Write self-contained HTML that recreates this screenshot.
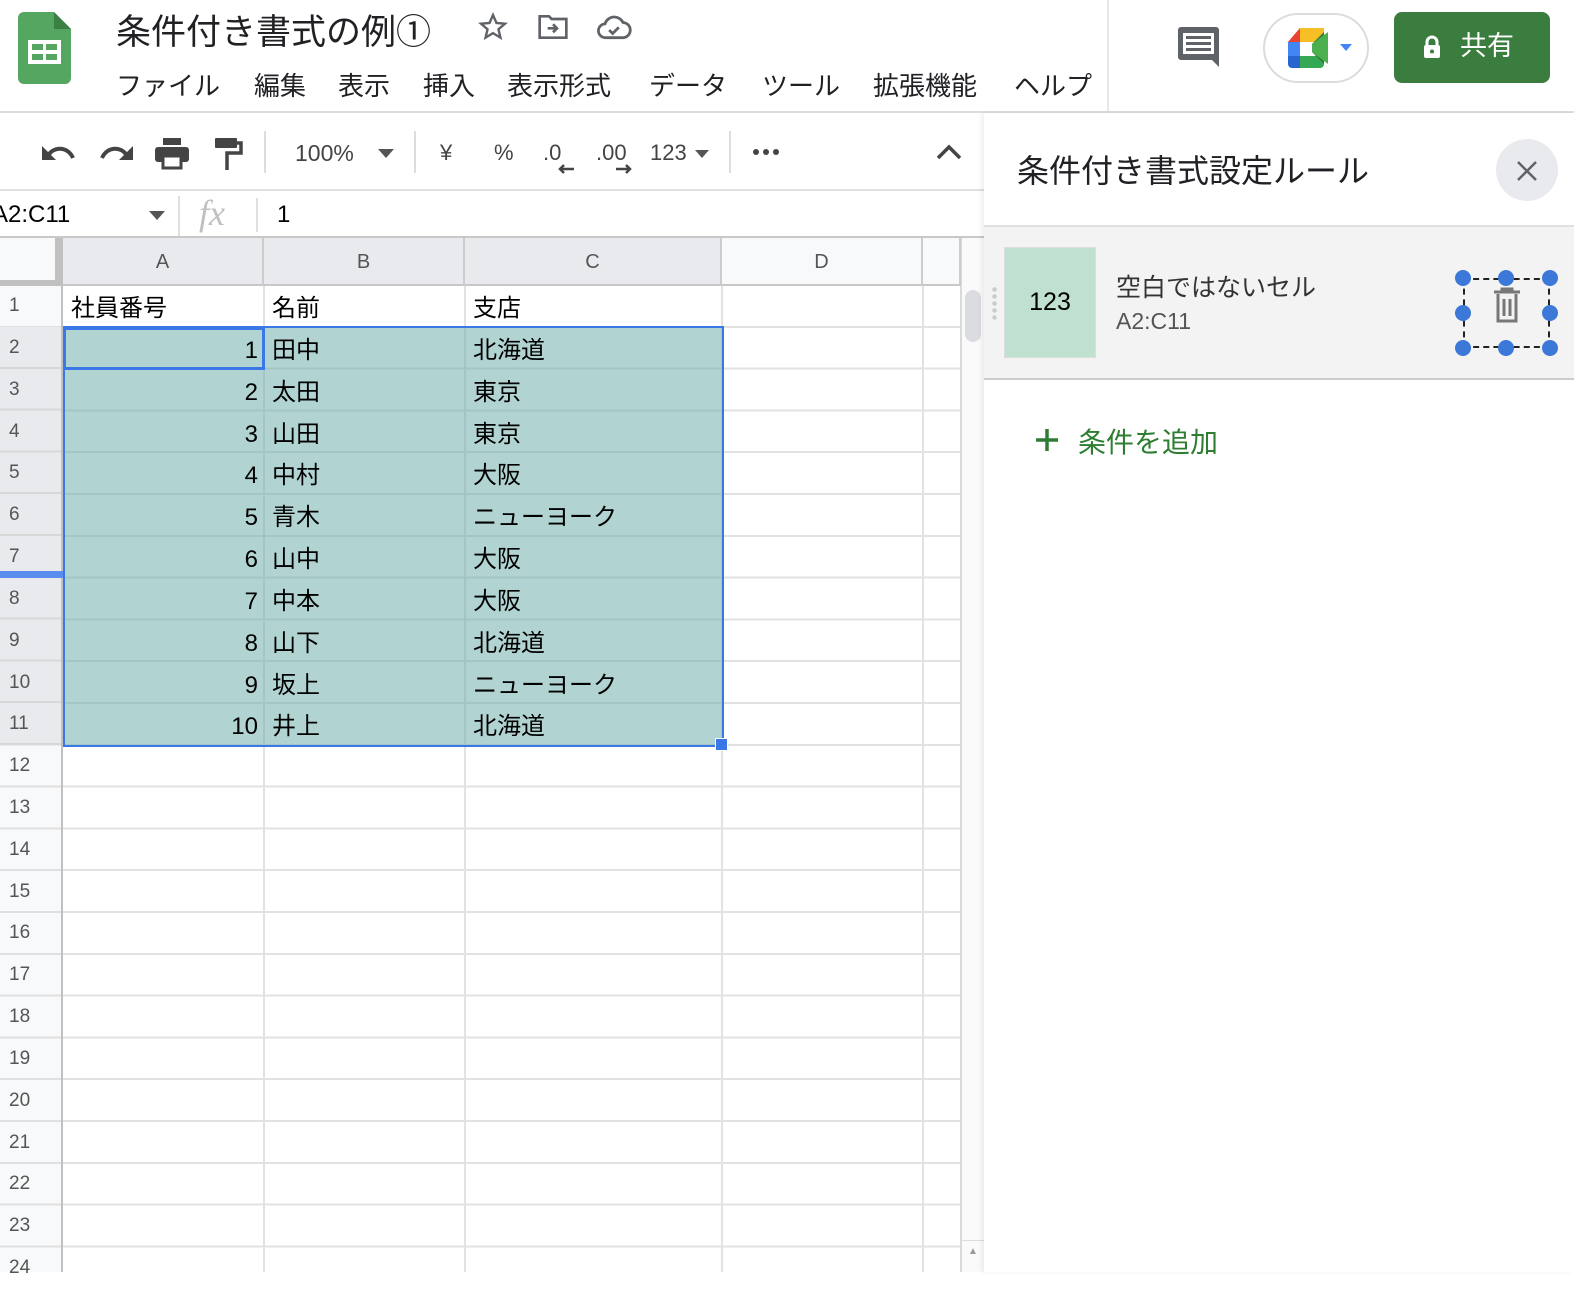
<!DOCTYPE html>
<html><head><meta charset="utf-8"><style>
*{margin:0;padding:0;box-sizing:border-box}
body{width:1574px;height:1272px;position:relative;overflow:hidden;background:#fff;font-family:"Liberation Sans","Noto Sans CJK JP",sans-serif;color:#000}
.a{position:absolute;white-space:nowrap}
.menu span{position:absolute;top:66px;font-size:26px;color:#202124}
.tb{position:absolute;top:140px;font-size:24px;color:#444}
.sep{position:absolute;width:2px;background:#dadce0}
.rn{position:absolute;left:0;width:61px;height:42px;font-size:19px;color:#555;padding-left:9px;line-height:42px}
.c{position:absolute;font-size:24px;line-height:42px;height:42px;color:#000}
.ch{position:absolute;top:238px;height:48px;line-height:48px;text-align:center;font-size:20px;color:#555;border-right:2px solid #ccc;border-bottom:2px solid #c8c8c8}
</style></head><body>

<svg class="a" style="left:18px;top:12px" width="53" height="72" viewBox="0 0 53 72">
<path d="M6 0H36L53 17V66a6 6 0 0 1-6 6H6a6 6 0 0 1-6-6V6a6 6 0 0 1 6-6z" fill="#55a660"/>
<path d="M36 0L53 17H36z" fill="#3a8043"/>
<rect x="10" y="28" width="33" height="24" fill="#fff"/>
<rect x="14" y="32" width="11" height="6" fill="#55a660"/><rect x="28" y="32" width="11" height="6" fill="#55a660"/>
<rect x="14" y="42" width="11" height="6" fill="#55a660"/><rect x="28" y="42" width="11" height="6" fill="#55a660"/>
</svg>
<div class="a" style="left:116px;top:4px;font-size:35px;color:#202124">条件付き書式の例①</div>
<svg class="a" style="left:477px;top:11px" width="32" height="32" viewBox="0 0 24 24"><path d="M12 3l2.6 6 6.4.5-4.9 4.2 1.5 6.3L12 16.6 6.4 20l1.5-6.3L3 9.5 9.4 9z" fill="none" stroke="#5f6368" stroke-width="1.8"/></svg>
<svg class="a" style="left:537px;top:13px" width="32" height="28" viewBox="0 0 24 20"><path d="M2 2h7l2 2h11v14H2z" fill="none" stroke="#5f6368" stroke-width="2"/><path d="M8 11h7M12 8l3 3-3 3" fill="none" stroke="#5f6368" stroke-width="2"/></svg>
<svg class="a" style="left:596px;top:14px" width="36" height="28" viewBox="0 0 26 20"><path d="M7 17a5 5 0 0 1-.5-10A7 7 0 0 1 19.5 6 5.5 5.5 0 0 1 19 17z" fill="none" stroke="#5f6368" stroke-width="2"/><path d="M9.5 11.5l2.5 2.5 4.5-4.5" fill="none" stroke="#5f6368" stroke-width="2"/></svg>
<div class="menu"><span style="left:116px">ファイル</span><span style="left:254px">編集</span><span style="left:338px">表示</span><span style="left:423px">挿入</span><span style="left:507px">表示形式</span><span style="left:649px">データ</span><span style="left:762px">ツール</span><span style="left:873px">拡張機能</span><span style="left:1014px">ヘルプ</span></div>
<div class="a" style="left:1107px;top:0;width:2px;height:112px;background:#e8e8e8"></div>
<div class="a" style="left:0;top:111px;width:1574px;height:2px;background:#dadce0"></div>
<svg class="a" style="left:1178px;top:27px" width="41" height="40" viewBox="0 0 41 40"><path d="M3 0h35a3 3 0 0 1 3 3v37l-7-7H3a3 3 0 0 1-3-3V3a3 3 0 0 1 3-3z" fill="#5f6368"/><rect x="5" y="6" width="31" height="21" fill="#fff"/><rect x="8" y="9" width="25" height="3" fill="#5f6368"/><rect x="8" y="15" width="25" height="3" fill="#5f6368"/><rect x="8" y="21" width="25" height="3" fill="#5f6368"/></svg>
<div class="a" style="left:1263px;top:13px;width:106px;height:70px;border:2px solid #dadce0;border-radius:35px"></div>
<svg class="a" style="left:1288px;top:28px" width="70" height="40" viewBox="0 0 70 40">
<path d="M12 0H36V14H0z" fill="#f6bf26"/><path d="M0 14L12 0V14z" fill="#ea4335"/>
<rect x="0" y="14" width="12" height="14" fill="#4285f4"/><path d="M0 28h12v12H4a4 4 0 0 1-4-4z" fill="#2965d0"/>
<path d="M12 28H36V36a4 4 0 0 1-4 4H12z" fill="#34a853"/><path d="M12 14h12v14H12z" fill="#fff"/>
<path d="M36 4v32l-12-12v-8z" fill="#2e7d32"/><path d="M24 16L40 4v32L24 24z" fill="#4caf50"/>
<path d="M52 16h12l-6 7z" fill="#4285f4"/></svg>
<div class="a" style="left:1394px;top:12px;width:156px;height:71px;background:#3a7d3e;border-radius:8px;color:#fff;font-size:27px;line-height:69px;padding-left:66px">共有</div>
<svg class="a" style="left:1423px;top:35px" width="18" height="24" viewBox="0 0 18 24"><path d="M4 11V7a5 5 0 0 1 10 0v4" fill="none" stroke="#fff" stroke-width="3"/><rect x="1" y="10" width="16" height="13" rx="2" fill="#fff"/><circle cx="9" cy="16.5" r="2" fill="#3a7d3e"/></svg>

<svg class="a" style="left:42px;top:142px" width="34" height="24" viewBox="0 0 34 24"><path d="M6 14C11 4 26 4 31 16" fill="none" stroke="#444" stroke-width="4"/><path d="M0 4v14h14z" fill="#444"/></svg>
<svg class="a" style="left:99px;top:142px" width="34" height="24" viewBox="0 0 34 24"><path d="M28 14C23 4 8 4 3 16" fill="none" stroke="#444" stroke-width="4"/><path d="M34 4v14H20z" fill="#444"/></svg>
<svg class="a" style="left:155px;top:138px" width="34" height="32" viewBox="0 0 34 32"><rect x="8" y="0" width="18" height="7" fill="#444"/><rect x="0" y="9" width="34" height="15" rx="3" fill="#444"/><rect x="8" y="18" width="18" height="12" fill="#fff" stroke="#444" stroke-width="3"/></svg>
<svg class="a" style="left:215px;top:138px" width="28" height="32" viewBox="0 0 28 32"><rect x="0" y="0" width="22" height="10" rx="1" fill="#444"/><path d="M22 5h4v10H12v17" fill="none" stroke="#444" stroke-width="3.5"/></svg>
<div class="sep" style="left:264px;top:131px;height:42px"></div>
<div class="tb" style="left:295px;font-size:23px">100%</div>
<svg class="a" style="left:378px;top:149px" width="16" height="9"><path d="M0 0h16L8 9z" fill="#555"/></svg>
<div class="sep" style="left:414px;top:131px;height:42px"></div>
<div class="tb" style="left:440px;font-size:22px">¥</div>
<div class="tb" style="left:494px;font-size:22px">%</div>
<div class="tb" style="left:543px;font-size:22px">.0</div>
<svg class="a" style="left:556px;top:164px" width="18" height="10"><path d="M18 5H4M8 1L4 5l4 4" fill="none" stroke="#444" stroke-width="2.5"/></svg>
<div class="tb" style="left:596px;font-size:22px">.00</div>
<svg class="a" style="left:616px;top:164px" width="18" height="10"><path d="M0 5h14M10 1l4 4-4 4" fill="none" stroke="#444" stroke-width="2.5"/></svg>
<div class="tb" style="left:650px;font-size:22px">123</div>
<svg class="a" style="left:695px;top:150px" width="14" height="8"><path d="M0 0h14L7 8z" fill="#555"/></svg>
<div class="sep" style="left:729px;top:131px;height:42px"></div>
<svg class="a" style="left:752px;top:148px" width="28" height="8"><g fill="#444"><circle cx="4" cy="4" r="3"/><circle cx="14" cy="4" r="3"/><circle cx="24" cy="4" r="3"/></g></svg>
<svg class="a" style="left:936px;top:144px" width="26" height="16"><path d="M2 14L13 3l11 11" fill="none" stroke="#444" stroke-width="3.5"/></svg>
<div class="a" style="left:0;top:189px;width:984px;height:2px;background:#e0e0e0"></div>

<div class="a" style="left:-8px;top:201px;font-size:24px;color:#000">A2:C11</div>
<svg class="a" style="left:149px;top:211px" width="16" height="9"><path d="M0 0h16L8 9z" fill="#555"/></svg>
<div class="sep" style="left:178px;top:196px;height:40px;background:#e0e0e0"></div>
<div class="a" style="left:199px;top:192px;font-size:36px;font-family:'Liberation Serif',serif;font-style:italic;color:#c0c0c0">fx</div>
<div class="sep" style="left:256px;top:198px;height:34px;background:#e0e0e0"></div>
<div class="a" style="left:277px;top:201px;font-size:24px">1</div>
<div class="a" style="left:0;top:236px;width:984px;height:2px;background:#c8c8c8"></div>

<div class="a" style="left:63px;top:286px;width:898px;height:986px;background:repeating-linear-gradient(to bottom,#fff 0,#fff 39.8px,#e2e2e2 39.8px,#e2e2e2 41.8px)"></div>
<div class="a" style="left:263px;top:286px;width:2px;height:986px;background:#e2e2e2"></div>
<div class="a" style="left:464px;top:286px;width:2px;height:986px;background:#e2e2e2"></div>
<div class="a" style="left:721px;top:286px;width:2px;height:986px;background:#e2e2e2"></div>
<div class="a" style="left:922px;top:286px;width:2px;height:986px;background:#e2e2e2"></div>
<div class="a" style="left:960px;top:238px;width:2px;height:1034px;background:#dadada"></div>
<div class="a" style="left:962px;top:238px;width:22px;height:1034px;background:#fafafa"></div>
<div class="a" style="left:965px;top:290px;width:16px;height:52px;background:#dadce0;border-radius:8px"></div>
<div class="a" style="left:962px;top:1240px;width:22px;height:1px;background:#ddd"></div>
<div class="a" style="left:968px;top:1246px;font-size:10px;color:#999">▲</div>

<div class="a" style="left:0;top:238px;width:63px;height:48px;background:#f8f9fa"></div>
<div class="a" style="left:0;top:238px;width:63px;height:48px;border-right:8px solid #c0c0c0;border-bottom:6px solid #c0c0c0"></div>
<div class="ch" style="left:63px;width:201px;background:#e8eaed">A</div>
<div class="ch" style="left:264px;width:201px;background:#e8eaed">B</div>
<div class="ch" style="left:465px;width:257px;background:#e8eaed">C</div>
<div class="ch" style="left:722px;width:201px;background:#f8f9fa">D</div>
<div class="ch" style="left:923px;width:38px;background:#f8f9fa"></div>

<div class="a" style="left:0;top:286px;width:63px;height:986px;background:repeating-linear-gradient(to bottom,#f8f9fa 0,#f8f9fa 39.8px,#e0e0e0 39.8px,#e0e0e0 41.8px)"></div>
<div class="a" style="left:0;top:327px;width:61px;height:419px;background:repeating-linear-gradient(to bottom,#e8eaed 0,#e8eaed 39.8px,#d8d8d8 39.8px,#d8d8d8 41.8px)"></div>
<div class="a" style="left:61px;top:286px;width:2px;height:986px;background:#c0c0c0"></div>
<div class="a" style="left:0;top:571px;width:63px;height:7px;background:#5b8def"></div>
<div class="rn" style="top:285px">1</div><div class="rn" style="top:327px">2</div><div class="rn" style="top:369px">3</div><div class="rn" style="top:411px">4</div><div class="rn" style="top:452px">5</div><div class="rn" style="top:494px">6</div><div class="rn" style="top:536px">7</div><div class="rn" style="top:578px">8</div><div class="rn" style="top:620px">9</div><div class="rn" style="top:662px">10</div><div class="rn" style="top:703px">11</div><div class="rn" style="top:745px">12</div><div class="rn" style="top:787px">13</div><div class="rn" style="top:829px">14</div><div class="rn" style="top:871px">15</div><div class="rn" style="top:912px">16</div><div class="rn" style="top:954px">17</div><div class="rn" style="top:996px">18</div><div class="rn" style="top:1038px">19</div><div class="rn" style="top:1080px">20</div><div class="rn" style="top:1122px">21</div><div class="rn" style="top:1163px">22</div><div class="rn" style="top:1205px">23</div><div class="rn" style="top:1247px">24</div>

<div class="a" style="left:63px;top:327px;width:660px;height:420px;background:rgba(100,170,165,0.5)"></div>
<div class="a" style="left:63px;top:326px;width:661px;height:421px;border:2px solid #3b78e7"></div>
<div class="a" style="left:63px;top:327px;width:202px;height:43px;border:3px solid #3b78e7"></div>
<div class="a" style="left:715px;top:738px;width:13px;height:13px;background:#3b78e7;border:1px solid #fff"></div>

<div class="c" style="left:71px;top:288px">社員番号</div><div class="c" style="left:272px;top:288px">名前</div><div class="c" style="left:473px;top:288px">支店</div>
<div class="c" style="left:63px;width:195px;text-align:right;top:330px">1</div><div class="c" style="left:272px;top:330px">田中</div><div class="c" style="left:473px;top:330px">北海道</div>
<div class="c" style="left:63px;width:195px;text-align:right;top:372px">2</div><div class="c" style="left:272px;top:372px">太田</div><div class="c" style="left:473px;top:372px">東京</div>
<div class="c" style="left:63px;width:195px;text-align:right;top:414px">3</div><div class="c" style="left:272px;top:414px">山田</div><div class="c" style="left:473px;top:414px">東京</div>
<div class="c" style="left:63px;width:195px;text-align:right;top:455px">4</div><div class="c" style="left:272px;top:455px">中村</div><div class="c" style="left:473px;top:455px">大阪</div>
<div class="c" style="left:63px;width:195px;text-align:right;top:497px">5</div><div class="c" style="left:272px;top:497px">青木</div><div class="c" style="left:473px;top:497px">ニューヨーク</div>
<div class="c" style="left:63px;width:195px;text-align:right;top:539px">6</div><div class="c" style="left:272px;top:539px">山中</div><div class="c" style="left:473px;top:539px">大阪</div>
<div class="c" style="left:63px;width:195px;text-align:right;top:581px">7</div><div class="c" style="left:272px;top:581px">中本</div><div class="c" style="left:473px;top:581px">大阪</div>
<div class="c" style="left:63px;width:195px;text-align:right;top:623px">8</div><div class="c" style="left:272px;top:623px">山下</div><div class="c" style="left:473px;top:623px">北海道</div>
<div class="c" style="left:63px;width:195px;text-align:right;top:665px">9</div><div class="c" style="left:272px;top:665px">坂上</div><div class="c" style="left:473px;top:665px">ニューヨーク</div>
<div class="c" style="left:63px;width:195px;text-align:right;top:706px">10</div><div class="c" style="left:272px;top:706px">井上</div><div class="c" style="left:473px;top:706px">北海道</div>

<div class="a" style="left:984px;top:113px;width:590px;height:1159px;background:#fff;box-shadow:-3px 0 4px rgba(0,0,0,0.06)"></div>
<div class="a" style="left:1017px;top:146px;font-size:32px;color:#202124">条件付き書式設定ルール</div>
<div class="a" style="left:1496px;top:139px;width:62px;height:62px;border-radius:50%;background:#e8eaed"></div>
<svg class="a" style="left:1516px;top:160px" width="22" height="22"><path d="M2 2l18 18M20 2L2 20" stroke="#5f6368" stroke-width="2.5"/></svg>
<div class="a" style="left:984px;top:225px;width:590px;height:155px;background:#f3f3f3;border-top:2px solid #e0e0e0;border-bottom:2px solid #ccc"></div>
<div class="a" style="left:992px;top:286px;width:5px;height:36px;background:radial-gradient(circle,#ccc 2px,transparent 2.5px) 0 0/5px 7px"></div>
<div class="a" style="left:1004px;top:247px;width:92px;height:111px;background:#c0e0d0;border:1px solid #ddd;text-align:center;line-height:109px;font-size:25px">123</div>
<div class="a" style="left:1116px;top:268px;font-size:25px;color:#333">空白ではないセル</div>
<div class="a" style="left:1116px;top:308px;font-size:23px;color:#555">A2:C11</div>
<div class="a" style="left:1463px;top:278px;width:87px;height:70px;border:2px dashed #222"></div>
<svg class="a" style="left:1454px;top:268px" width="106" height="90">
<g fill="#3b78d8"><circle cx="9" cy="10" r="8"/><circle cx="52" cy="10" r="8"/><circle cx="96" cy="10" r="8"/><circle cx="9" cy="45" r="8"/><circle cx="96" cy="45" r="8"/><circle cx="9" cy="80" r="8"/><circle cx="52" cy="80" r="8"/><circle cx="96" cy="80" r="8"/></g>
<g fill="none" stroke="#777" stroke-width="3"><path d="M40 24h26M48 24v-3h10v3"/><path d="M44 26v27h18V26"/><path d="M50 31v17M56 31v17"/></g></svg>
<svg class="a" style="left:1036px;top:429px" width="22" height="22"><path d="M11 0v22M0 11h22" stroke="#2e7d32" stroke-width="3.5"/></svg>
<div class="a" style="left:1078px;top:421px;font-size:28px;color:#2e7d32">条件を追加</div>
</body></html>
